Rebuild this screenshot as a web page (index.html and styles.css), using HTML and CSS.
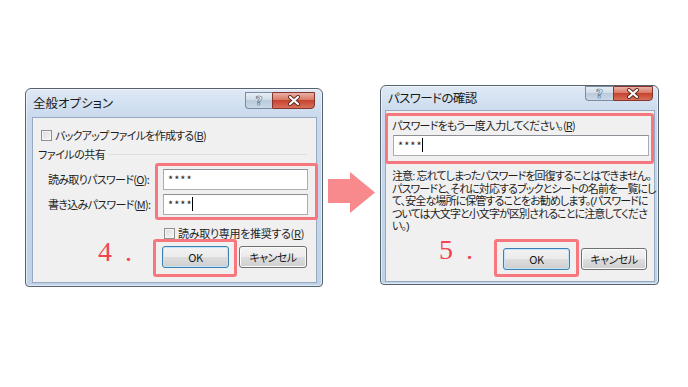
FILE: index.html
```html
<!DOCTYPE html>
<html lang="ja">

<head>
    <meta charset="UTF-8">
    <meta name="viewport" content="width=device-width, initial-scale=1.0">
    <title>パスワードの設定</title>
    <link rel="stylesheet" href="styles.css">
</head>

<body>
    <div class="stage">
        <!-- 全般オプション -->
        <div class="dialog dialog-options">
            <div class="title-bar">
                <span class="title">全般オプション</span>
                <div class="caption-buttons">
                    <span class="help-button">?</span>
                    <span class="close-button">
                        <svg width="14" height="11" viewBox="0 0 14 11">
                            <path d="M3 2 L11 9 M11 2 L3 9" stroke="#5a2820" stroke-width="4" stroke-linecap="round" />
                            <path d="M3 2 L11 9 M11 2 L3 9" stroke="#fff" stroke-width="2.2" stroke-linecap="round" />
                        </svg>
                    </span>
                </div>
            </div>
            <div class="panel panel-options">
                <div class="check-row">
                    <span class="checkbox"></span>バックアップ ファイルを作成する(<u>B</u>)
                </div>
                <div class="group-title">ファイルの共有</div>
                <div class="password-row">
                    <div class="labels">
                        <div class="field-label">読み取りパスワード(<u>O</u>):</div>
                        <div class="field-label">書き込みパスワード(<u>M</u>):</div>
                    </div>
                    <div class="highlight inputs">
                        <div class="text-box">****</div>
                        <div class="text-box">****<span class="caret"></span></div>
                    </div>
                </div>
                <div class="check-row check-readonly">
                    <span class="checkbox"></span>読み取り専用を推奨する(<u>R</u>)
                </div>
                <div class="button-row">
                    <span class="step step-four">4<span class="dot">.</span></span>
                    <div class="highlight ok-wrap"><button class="btn btn-default">OK</button></div>
                    <button class="btn btn-cancel">キャンセル</button>
                </div>
            </div>
        </div>

        <svg class="arrow" width="47" height="41" viewBox="0 0 47 41">
            <path d="M0 7 H22 V0 L47 20.5 L22 41 V31 H0 Z" fill="#f8898d" />
        </svg>

        <!-- パスワードの確認 -->
        <div class="dialog dialog-confirm">
            <div class="title-bar">
                <span class="title">パスワードの確認</span>
                <div class="caption-buttons">
                    <span class="help-button">?</span>
                    <span class="close-button">
                        <svg width="14" height="11" viewBox="0 0 14 11">
                            <path d="M3 2 L11 9 M11 2 L3 9" stroke="#5a2820" stroke-width="4" stroke-linecap="round" />
                            <path d="M3 2 L11 9 M11 2 L3 9" stroke="#fff" stroke-width="2.2" stroke-linecap="round" />
                        </svg>
                    </span>
                </div>
            </div>
            <div class="panel panel-confirm">
                <div class="highlight reenter">
                    <div class="reenter-label">パスワードをもう一度入力してください。(<u>R</u>)</div>
                    <div class="text-box">****<span class="caret"></span></div>
                </div>
                <p class="note">
                    注意: 忘れてしまったパスワードを回復することはできません。<br>
                    パスワードと、それに対応するブックとシートの名前を一覧にし<br>
                    て、安全な場所に保管することをお勧めします。(パスワードに<br>
                    ついては大文字と小文字が区別されることに注意してくださ<br>
                    い。)
                </p>
                <div class="button-row">
                    <span class="step step-five">5<span class="dot">.</span></span>
                    <div class="highlight ok-wrap"><button class="btn btn-default">OK</button></div>
                    <button class="btn btn-cancel">キャンセル</button>
                </div>
            </div>
        </div>
    </div>
</body>

</html>
```

FILE: styles.css
```css
body {
    margin: 0;
    background-color: #fff;
    color: #1e1e1e;
    font-family: "Noto Sans CJK JP", "Noto Sans", sans-serif;
    font-size: 11px;
    font-feature-settings: "palt";
}

.stage {
    display: flex;
    align-items: flex-start;
    padding: 85px 0 0 25px;
}

/* window frame */
.dialog {
    box-sizing: border-box;
    display: flex;
    flex-direction: column;
    border: 1px solid #56616e;
    border-radius: 6px 6px 4px 4px;
    background: linear-gradient(#dfe9f5, #c9daed 28px, #bfd2e7);
    box-shadow: inset 0 0 0 1px rgba(255, 255, 255, 0.55);
}

.dialog-options {
    width: 298px;
    height: 199px;
    margin-top: 3px;
    padding: 0 5px 3px 6px;
}

.dialog-confirm {
    width: 279px;
    height: 200px;
    padding: 0 3px 2px 4px;
}

.title-bar {
    display: flex;
    align-items: flex-start;
    flex-shrink: 0;
}

.dialog-options .title-bar {
    height: 28px;
}

.dialog-confirm .title-bar {
    height: 24px;
}

.title {
    font-size: 12.5px;
    color: #1a1a1a;
    padding-left: 1px;
}

.dialog-options .title {
    line-height: 28px;
}

.dialog-confirm .title {
    line-height: 24px;
    padding-left: 3px;
    letter-spacing: -0.6px;
}

.caption-buttons {
    display: flex;
    margin-left: auto;
    margin-right: 2px;
}

.dialog-options .caption-buttons {
    margin-top: 3px;
}

.help-button,
.close-button {
    box-sizing: border-box;
    display: flex;
    justify-content: center;
    align-items: center;
}

.help-button {
    width: 27px;
    height: 17px;
    border: 1px solid #7b8ca0;
    border-right: none;
    border-radius: 0 0 0 4px;
    background: linear-gradient(#e6edf5, #d2dde9 45%, #bccbdc 50%, #cad8e7);
    color: #fff;
    font-family: "DejaVu Sans", sans-serif;
    font-weight: bold;
    font-size: 12px;
    -webkit-text-stroke: 0.7px #5f7186;
}

.close-button {
    width: 43px;
    height: 17px;
    border: 1px solid #84352d;
    border-radius: 0 0 4px 0;
    background: linear-gradient(#eab0a6, #d97a68 45%, #c7432f 50%, #d8705b);
}

.dialog-confirm .help-button {
    width: 28px;
    height: 15px;
}

.dialog-confirm .close-button {
    width: 40px;
    height: 15px;
}

/* dialog body */
.panel {
    flex: 1;
    box-sizing: border-box;
    border: 1px solid #98aac0;
    background-color: #f0f0f0;
}

.panel-options {
    padding: 9px 9px 0 8px;
}

.panel-confirm {
    padding: 2px 0 0 0;
}

.check-row {
    display: flex;
    align-items: center;
    height: 16px;
    line-height: 16px;
    white-space: nowrap;
    letter-spacing: -0.75px;
}

.checkbox {
    box-sizing: border-box;
    flex-shrink: 0;
    width: 11px;
    height: 11px;
    margin-right: 3px;
    border: 1px solid #8f8f8f;
    background: linear-gradient(135deg, #dcdcdc, #f6f6f6);
    box-shadow: inset 0 0 0 1px #f4f4f4;
}

.group-title {
    display: flex;
    align-items: center;
    gap: 3px;
    margin: 3px 0 0 -3px;
    line-height: 16px;
    letter-spacing: -0.5px;
}

.group-title::after {
    content: "";
    flex: 1;
    border-top: 1px solid #dedede;
}

.password-row {
    display: flex;
    margin-top: 1px;
    padding-left: 7px;
}

.labels {
    width: 107px;
    flex-shrink: 0;
    padding-top: 6px;
}

.field-label {
    height: 21px;
    line-height: 21px;
    margin-bottom: 4px;
    white-space: nowrap;
    letter-spacing: -0.7px;
}

/* red annotation frames */
.highlight {
    box-sizing: border-box;
    flex-shrink: 0;
    border: 3px solid #f6787e;
    border-radius: 3px;
}

.inputs {
    width: 163px;
    padding: 3px 7px 2px 5px;
}

.inputs .text-box + .text-box {
    margin-top: 4px;
}

.text-box {
    box-sizing: border-box;
    display: flex;
    align-items: flex-start;
    height: 21px;
    padding: 2px 0 0 4px;
    border: 1px solid #abadb3;
    border-top-color: #8c8f96;
    background-color: #fff;
    font-size: 11px;
    letter-spacing: 1px;
    line-height: 14px;
}

.caret {
    display: inline-block;
    width: 1px;
    height: 14px;
    margin-left: -1px;
    background-color: #000;
}

.check-readonly {
    height: 14px;
    line-height: 14px;
    margin-top: 6px;
    padding-left: 123px;
    letter-spacing: -0.3px;
}

.button-row {
    display: flex;
    align-items: flex-start;
    justify-content: flex-end;
}

.panel-options .button-row {
    margin-top: -1px;
}

.step {
    font-family: "Liberation Serif", serif;
    font-size: 28px;
    line-height: 30px;
    color: #f2434f;
    margin-right: 21px;
}

.step-four {
    margin-top: -2px;
}

.step-five {
    margin-top: -4px;
}

.dot {
    margin-left: 13px;
}

.ok-wrap {
    padding: 4px 5px 6px 6px;
}

.btn {
    box-sizing: border-box;
    width: 67px;
    height: 22px;
    padding: 0;
    border: 1px solid #707070;
    border-radius: 3px;
    background: linear-gradient(#f3f3f3, #ebebeb 50%, #dddddd 50%, #cfcfcf);
    box-shadow: inset 0 0 0 1px #fbfbfb;
    color: #1a1a1a;
    font-family: "Noto Sans CJK JP", sans-serif;
    font-size: 11px;
    font-feature-settings: "palt";
    letter-spacing: -0.5px;
}

.btn-default {
    border-color: #3c7fb1;
    box-shadow: inset 0 0 0 1px #c3e4f8;
}

.btn-cancel {
    width: 68px;
    margin: 7px 0 0 2px;
}

/* パスワードの確認 */
.reenter {
    margin-left: -1px;
    padding: 1px 2px 5px 5px;
}

.reenter-label {
    line-height: 16px;
    margin: 0 0 2px -1px;
    letter-spacing: -0.8px;
}

.note {
    margin: 6px 0 0 6px;
    font-family: "Liberation Sans", "Noto Sans CJK JP", sans-serif;
    line-height: 12.5px;
    white-space: nowrap;
    letter-spacing: -0.9px;
}

.panel-confirm .button-row {
    margin-top: 6px;
    padding-right: 7px;
}

.panel-confirm .ok-wrap {
    padding: 6px 6px 4px 6px;
}

.panel-confirm .btn-cancel {
    width: 66px;
    margin-top: 9px;
}

.arrow {
    flex-shrink: 0;
    margin: 87px 5px 0 5px;
}
```
